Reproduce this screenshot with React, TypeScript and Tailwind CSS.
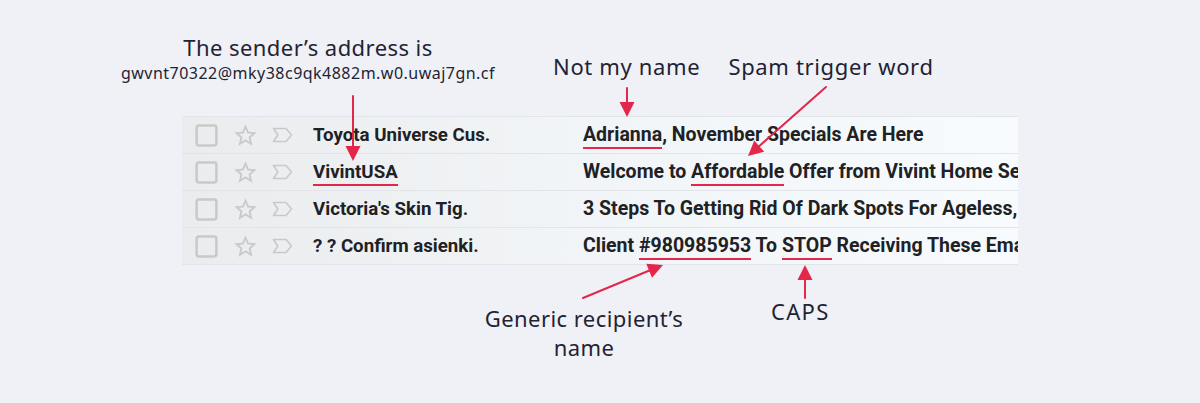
const RED = "#e3264a";

type Row = { sender: React.ReactNode; subject: React.ReactNode };

const mark = "border-b-2 border-[#e3264a] pb-[1px]";

const rows: Row[] = [
    {
        sender: "Toyota Universe Cus.",
        subject: (
            <>
                <span className={mark}>Adrianna</span>, November Specials Are Here
            </>
        ),
    },
    {
        sender: <span className={mark}>VivintUSA</span>,
        subject: (
            <>
                Welcome to <span className={mark}>Affordable</span> Offer from Vivint Home Security
            </>
        ),
    },
    {
        sender: "Victoria's Skin Tig.",
        subject: "3 Steps To Getting Rid Of Dark Spots For Ageless, Radiant Skin",
    },
    {
        sender: "? ? Confirm asienki.",
        subject: (
            <>
                Client <span className={mark}>#980985953</span> To <span className={mark}>STOP</span> Receiving These Emails
            </>
        ),
    },
];

function CheckBox() {
    return (
        <svg width="25" height="25" viewBox="0 0 24 24" fill="none">
            <rect x="2.5" y="2.5" width="19" height="19" rx="2" stroke="#c9c9c9" strokeWidth="2.4" />
        </svg>
    );
}

function Star() {
    return (
        <svg width="27" height="27" viewBox="0 0 24 24" fill="#c9c9c9">
            <path d="M22 9.24l-7.19-.62L12 2 9.19 8.63 2 9.24l5.46 4.73L5.82 21 12 17.27 18.18 21l-1.63-7.03L22 9.24zM12 15.4l-3.76 2.27 1-4.28-3.32-2.88 4.38-.38L12 6.1l1.71 4.04 4.38.38-3.32 2.88 1 4.28L12 15.4z" />
        </svg>
    );
}

function Label() {
    return (
        <svg width="24" height="24" viewBox="0 0 24 24" fill="none">
            <path d="M2.5 5.5h12.5l5.5 6.5-5.5 6.5H2.5l4.3-6.5z" stroke="#c9c9c9" strokeWidth="1.6" strokeLinejoin="round" />
        </svg>
    );
}

function Arrows() {
    const head = (x: number, y: number, angle: number) => (
        <polygon points="0,0 -15,-7.5 -15,7.5" fill={RED} transform={`translate(${x} ${y}) rotate(${angle})`} />
    );
    return (
        <svg className="pointer-events-none absolute left-0 top-0" width="1200" height="403">
            <g stroke={RED} strokeWidth="2" strokeLinecap="round">
                <line x1="353" y1="96" x2="353" y2="150" />
                <line x1="627" y1="88" x2="627" y2="106" />
                <line x1="826" y1="87" x2="756" y2="149" />
                <line x1="583" y1="298" x2="653" y2="269" />
                <line x1="805" y1="298" x2="805" y2="276" />
            </g>
            {head(353, 161, 90)}
            {head(627, 117, 90)}
            {head(748, 156, 138.5)}
            {head(663, 265, -22.5)}
            {head(805, 265, -90)}
        </svg>
    );
}

export default function App() {
    return (
        <div
            className="relative h-[403px] w-[1200px] overflow-hidden bg-[#eff1f6] text-[#1f2333]"
            style={{ fontFamily: "'Noto Sans', Lato, sans-serif" }}
        >
            <div className="flex h-[116px] pt-[32px]">
                <div className="ml-[106px] w-[404px] text-center">
                    <div className="text-[22px] leading-[30px] tracking-[0.02em]">The sender’s address is</div>
                    <div className="text-[16px] leading-[22px] tracking-[0.03em]">gwvnt70322@mky38c9qk4882m.w0.uwaj7gn.cf</div>
                </div>
                <div className="ml-[43px] mt-[19px] text-[22px] leading-[30px] tracking-[0.03em]">Not my name</div>
                <div className="ml-[28px] mt-[19px] text-[22px] leading-[30px] tracking-[0.03em]">Spam trigger word</div>
            </div>

            <div
                className="ml-[182px] w-[836px] border-b border-[#e1e4e8] font-bold text-[#202124]"
                style={{ fontFamily: "Roboto, 'Liberation Sans', sans-serif" }}
            >
                {rows.map((r, i) => (
                    <div
                        key={i}
                        className="flex h-[37px] items-center border-t border-[#e1e4e8] bg-gradient-to-r from-[#eaecee] via-[#f2f5f7] to-[#f7fbfd]"
                    >
                        <div className="ml-[10px] flex w-[28px] justify-center">
                            <CheckBox />
                        </div>
                        <div className="ml-[11px] flex w-[28px] justify-center">
                            <Star />
                        </div>
                        <div className="ml-[10px] flex w-[28px] justify-center">
                            <Label />
                        </div>
                        <div className="ml-[16px] w-[270px] whitespace-nowrap text-[18.7px]">{r.sender}</div>
                        <div className="min-w-0 flex-1 overflow-hidden whitespace-nowrap text-[19.5px]">{r.subject}</div>
                    </div>
                ))}
            </div>

            <div className="flex">
                <div className="ml-[464px] mt-[39px] w-[240px] text-center text-[22px] leading-[29px] tracking-[0.02em]">
                    Generic recipient’s
                    <br />
                    name
                </div>
                <div className="ml-[67px] mt-[32px] text-[22px] leading-[29px] tracking-[0.06em]">CAPS</div>
            </div>

            <Arrows />
        </div>
    );
}
